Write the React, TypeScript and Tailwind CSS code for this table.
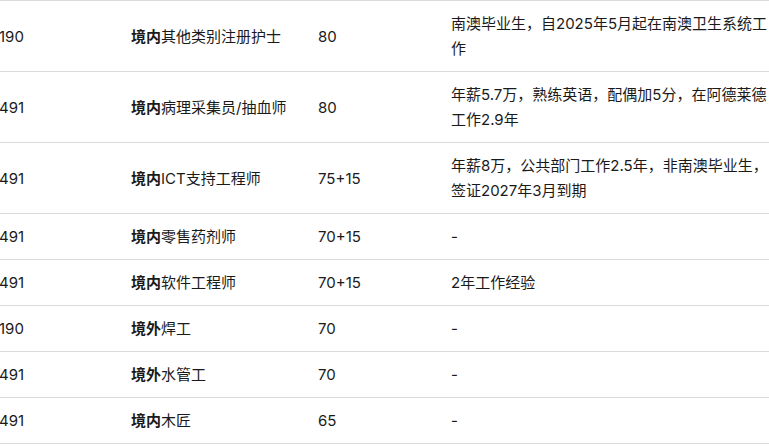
import React from 'react';

type Row = {
  visa: string;
  place: string;
  job: string;
  score: string;
  note: string;
};

const rows: Row[] = [
  { visa: '190', place: '境内', job: '其他类别注册护士', score: '80', note: '南澳毕业生，自2025年5月起在南澳卫生系统工作' },
  { visa: '491', place: '境内', job: '病理采集员/抽血师', score: '80', note: '年薪5.7万，熟练英语，配偶加5分，在阿德莱德工作2.9年' },
  { visa: '491', place: '境内', job: 'ICT支持工程师', score: '75+15', note: '年薪8万，公共部门工作2.5年，非南澳毕业生，签证2027年3月到期' },
  { visa: '491', place: '境内', job: '零售药剂师', score: '70+15', note: '-' },
  { visa: '491', place: '境内', job: '软件工程师', score: '70+15', note: '2年工作经验' },
  { visa: '190', place: '境外', job: '焊工', score: '70', note: '-' },
  { visa: '491', place: '境外', job: '水管工', score: '70', note: '-' },
  { visa: '491', place: '境内', job: '木匠', score: '65', note: '-' },
];

export default function App() {
  return (
    <div
      className="w-[769px] h-[447px] overflow-hidden bg-white text-[#1a1a1a]"
      style={{ fontFamily: 'Inter, "Noto Sans CJK SC", sans-serif' }}
    >
      <table className="table-fixed border-collapse w-[796px] -ml-[13px] text-[15px] leading-[25px]">
        <colgroup>
          <col className="w-[132px]" />
          <col className="w-[187px]" />
          <col className="w-[133px]" />
          <col className="w-[344px]" />
        </colgroup>
        <tbody>
          {rows.map((r, i) => (
            <tr key={i} className="border-y border-[#dadada]">
              <td className="px-3 py-[10px] align-middle">{r.visa}</td>
              <td className="px-3 py-[10px] align-middle">
                <span className="font-bold">{r.place}</span>
                {r.job}
              </td>
              <td className="px-3 py-[10px] align-middle">{r.score}</td>
              <td className="px-3 py-[10px] align-middle">{r.note}</td>
            </tr>
          ))}
        </tbody>
      </table>
    </div>
  );
}
